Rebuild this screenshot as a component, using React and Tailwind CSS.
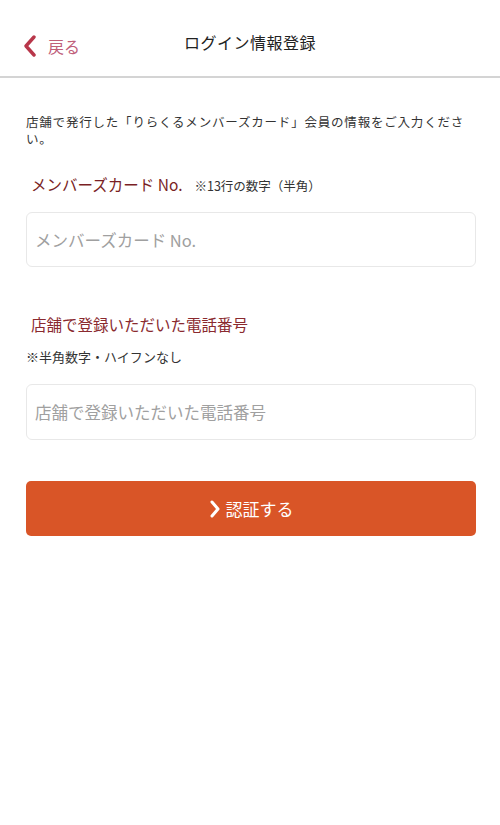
import React from "react";

const font = { fontFamily: '"Noto Sans CJK JP", "Noto Sans", sans-serif' };

export default function App() {
  return (
    <div className="w-[500px] min-h-[825px] bg-white" style={font}>
      {/* Header */}
      <div className="relative h-[78px] flex items-center justify-center pt-[8px] border-b-2 border-[#d4d4d4]">
        <button className="absolute left-[22px] top-[35px] flex items-center gap-[10px]">
          <svg width="16" height="22" viewBox="0 0 16 22" fill="none">
            <path d="M12 2 L4 11 L12 20" stroke="#b8364a" strokeWidth="3.4" strokeLinecap="round" strokeLinejoin="round" />
          </svg>
          <span className="text-[16px] leading-none text-[#c0607a]">戻る</span>
        </button>
        <h1 className="text-[16px] text-[#222] tracking-[0.5px]">ログイン情報登録</h1>
      </div>

      <div className="pl-[26px] pr-[24px] pt-[35px]">
        <p className="text-[12.5px] leading-[17px] tracking-[0.8px] text-[#333]">
          店舗で発行した「りらくるメンバーズカード」会員の情報をご入力ください。
        </p>

        {/* Member card */}
        <div className="mt-[26px] flex items-baseline pl-[5px]">
          <span className="text-[15.5px] text-[#7a1f25]">メンバーズカード No.</span>
          <span className="ml-[12px] text-[12.5px] text-[#333]">※13行の数字（半角）</span>
        </div>
        <input
          className="mt-[16px] w-full h-[55px] rounded-[6px] border border-[#e8e8e8] px-[8px] text-[16.5px] text-[#333] placeholder:text-[#a0a0a0] outline-none"
          style={font}
          placeholder="メンバーズカード No."
        />

        {/* Phone */}
        <div className="mt-[46px] pl-[5px] text-[15.5px] text-[#8a2a2f]">店舗で登録いただいた電話番号</div>
        <div className="mt-[10px] text-[13px] text-[#333]">※半角数字・ハイフンなし</div>
        <input
          className="mt-[18px] w-full h-[56px] rounded-[6px] border border-[#e8e8e8] px-[8px] text-[16.5px] text-[#333] placeholder:text-[#a0a0a0] outline-none"
          style={font}
          placeholder="店舗で登録いただいた電話番号"
        />

        <button
          className="mt-[41px] w-full h-[55px] rounded-[5px] bg-[#d95527] flex items-center justify-center gap-[5px] text-white text-[17px]"
          style={font}
        >
          <svg width="12" height="18" viewBox="0 0 12 18" fill="none">
            <path d="M3 2 L9 9 L3 16" stroke="white" strokeWidth="3" strokeLinecap="round" strokeLinejoin="round" />
          </svg>
          <span>認証する</span>
        </button>
      </div>
    </div>
  );
}
